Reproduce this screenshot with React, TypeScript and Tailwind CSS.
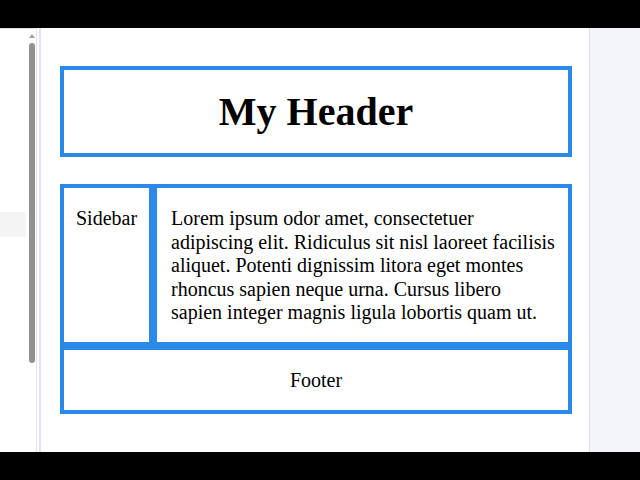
export default function App() {
  const serif = { fontFamily: '"Liberation Serif", "Times New Roman", serif' };
  return (
    <div className="w-[640px] h-[480px] flex flex-col overflow-hidden bg-white">
      <div className="h-[28px] bg-black shrink-0" />
      <div className="h-[424px] flex shrink-0">
        {/* left panel */}
        <div className="w-[36px] h-full flex flex-col shrink-0">
          <div className="h-px bg-[#dedede] w-full" />
          <div className="flex flex-1">
            <div className="w-[27px] flex flex-col">
              <div className="h-[183px]" />
              <div className="h-[25px] w-[26px] bg-[#f4f4f4]" />
            </div>
            <div className="w-[9px] flex flex-col items-center pt-[5px]">
              <div className="w-0 h-0 border-l-[3px] border-r-[3px] border-b-[4px] border-l-transparent border-r-transparent border-b-[#a0a0a0]" />
              <div className="mt-[5px] w-[6px] h-[320px] rounded-full bg-[#919191]" />
            </div>
          </div>
        </div>
        <div className="w-px bg-[#e3e3e3] shrink-0" />
        <div className="w-[2px] shrink-0" />
        <div className="w-[2px] bg-[#e1e4ee] shrink-0" />
        {/* page */}
        <div className="w-[548px] shrink-0 bg-white pl-[19px] pt-[38px]" style={serif}>
          <div className="w-[512px] text-black">
            <div className="h-[91px] border-4 border-[#2b8ae8] flex items-center justify-center">
              <h1 className="text-[40px] font-bold leading-[46px] m-0">My Header</h1>
            </div>
            <div className="mt-[27px] grid grid-cols-[93px_419px] grid-rows-[162px_68px]">
              <div className="border-4 border-[#2b8ae8] pt-[19px] text-center text-[20px] leading-[23.5px]">
                Sidebar
              </div>
              <div className="border-4 border-[#2b8ae8] pt-[19px] pl-[14px] pr-[12px] text-[20px] leading-[23.5px]">
                Lorem ipsum odor amet, consectetuer adipiscing elit. Ridiculus sit nisl laoreet facilisis aliquet. Potenti dignissim litora eget montes rhoncus sapien neque urna. Cursus libero sapien integer magnis ligula lobortis quam ut.
              </div>
              <div className="col-span-2 border-4 border-[#2b8ae8] flex items-center justify-center text-[20px] leading-[23.5px] pt-px">
                Footer
              </div>
            </div>
          </div>
        </div>
        <div className="w-px bg-[#dcdee4] shrink-0" />
        <div className="flex-1 bg-[#f4f5f9]" />
      </div>
      <div className="h-[28px] bg-black shrink-0" />
    </div>
  );
}
